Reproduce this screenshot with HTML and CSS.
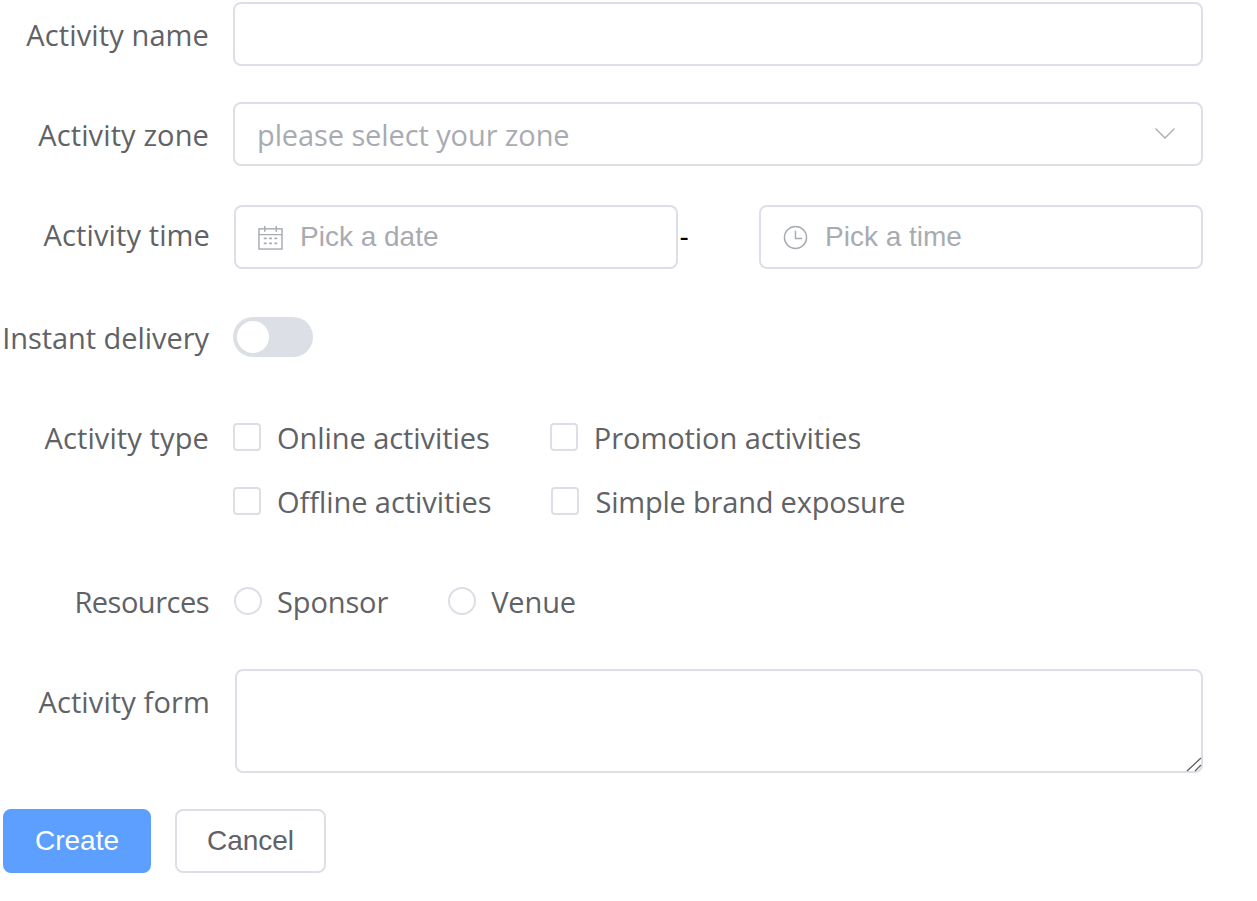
FILE: index.html
```html
<!DOCTYPE html>
<html lang="en">
<head>
<meta charset="utf-8">
<title>Activity form</title>
<link rel="stylesheet" href="styles.css">
</head>
<body>
<form class="form">
  <div class="row row-name">
    <label class="label">Activity name</label>
    <input class="field grow" type="text">
  </div>
  <div class="row">
    <label class="label">Activity zone</label>
    <div class="field grow select">
      <span class="select-text">please select your zone</span>
      <svg class="chevron" viewBox="0 0 20 11" width="20" height="11"><path d="M.5.5l9.500 9.500L19.500.5" fill="none" stroke="#a8abb2" stroke-width="1.300"/></svg>
    </div>
  </div>
  <div class="row row-time">
    <label class="label label-time">Activity time</label>
    <div class="time-fields">
      <div class="field picker">
        <svg class="picker-icon" viewBox="0 0 26 26" width="25" height="25" fill="none" stroke="#a8abb2" stroke-width="1.500">
          <rect x="1" y="4" width="24" height="21"/><path d="M1 10h24M7 1v6M19 1v6"/>
          <path d="M6 14h3M11.500 14h3M17 14h3M6 19h3M11.500 19h3M17 19h3" stroke-width="1.800"/>
        </svg>
        <span class="picker-text">Pick a date</span>
      </div>
      <span class="dash">-</span>
      <div class="field picker picker-end">
        <svg class="picker-icon" viewBox="0 0 26 26" width="25" height="25" fill="none" stroke="#a8abb2" stroke-width="1.500">
          <circle cx="13" cy="13" r="11.500"/><path d="M13 6v8h7"/>
        </svg>
        <span class="picker-text">Pick a time</span>
      </div>
    </div>
  </div>
  <div class="row">
    <label class="label label-tight">Instant delivery</label>
    <div class="line"><span class="switch"><span class="knob"></span></span></div>
  </div>
  <div class="row">
    <label class="label">Activity type</label>
    <div class="choices">
      <div class="line">
        <span class="choice"><span class="box"></span><span class="choice-text">Online activities</span></span>
        <span class="choice"><span class="box"></span><span class="choice-text">Promotion activities</span></span>
      </div>
      <div class="line">
        <span class="choice"><span class="box"></span><span class="choice-text">Offline activities</span></span>
        <span class="choice"><span class="box"></span><span class="choice-text choice-text-tight">Simple brand exposure</span></span>
      </div>
    </div>
  </div>
  <div class="row">
    <label class="label label-narrow">Resources</label>
    <div class="line">
      <span class="choice choice-radio"><span class="radio"></span><span class="choice-text">Sponsor</span></span>
      <span class="choice choice-radio"><span class="radio"></span><span class="choice-text">Venue</span></span>
    </div>
  </div>
  <div class="row">
    <label class="label label-form">Activity form</label>
    <div class="area-wrap">
      <textarea class="area"></textarea>
      <svg class="grip" viewBox="0 0 16 15" width="16" height="15"><path d="M1 14L15 1M9 14l6-6" fill="none" stroke="#5f5f5f" stroke-width="1.300"/></svg>
    </div>
  </div>
  <div class="actions">
    <button class="btn primary" type="button">Create</button>
    <button class="btn" type="button">Cancel</button>
  </div>
</form>
</body>
</html>
```
FILE: styles.css
```css
* { box-sizing: border-box; }
html, body { margin: 0; background: #fff; }
body { height: 901px; overflow: hidden; }
.form {
  width: 1203px;
  padding-top: 2px;
  display: flex;
  flex-direction: column;
  gap: 36px;
  font-family: "Open Sans", "Noto Sans", sans-serif;
  font-size: 29px;
  color: #606266;
}
.row { display: flex; align-items: flex-start; }
.label {
  flex: none;
  width: 233px;
  height: 64px;
  padding-right: 24px;
  line-height: 66px;
  letter-spacing: 0.12px;
  text-align: right;
  white-space: nowrap;
}
.label-time { width: 234px; padding-right: 24px; margin-top: -3px; }
.label-form { width: 235px; padding-right: 25px; }
.label-tight { letter-spacing: -0.05px; }
.label-narrow { letter-spacing: -0.5px; }
.field {
  height: 64px;
  border: 2px solid #dcdfe6;
  border-radius: 8px;
  background: #fff;
  display: flex;
  align-items: center;
}
.grow { flex: 1; min-width: 0; }
.select { padding: 0 26px 0 22px; justify-content: space-between; color: #a8abb2; }
.select-text { letter-spacing: -0.1px; }
.chevron { display: block; margin-top: -1px; }
.row-time { margin-top: 3px; }
.time-fields { display: flex; align-items: center; flex: 1; min-width: 0; }
.picker {
  width: 444px;
  padding-left: 22px;
  font-family: "Liberation Sans", Arial, sans-serif;
  font-size: 28px;
  color: #a8abb2;
}
.picker-end { margin-left: auto; }
.picker-icon { flex: none; margin-right: 17px; }
.dash { margin-left: 1.500px; color: #000; font-family: "Liberation Sans", Arial, sans-serif; font-size: 28px; }
.line { display: flex; align-items: center; height: 64px; }
.switch {
  width: 80px;
  height: 40px;
  border-radius: 20px;
  background: #dcdfe6;
  padding: 4px;
  display: block;
}
.knob { display: block; width: 32px; height: 32px; border-radius: 50%; background: #fff; }
.choices { display: flex; flex-direction: column; }
.choice { display: inline-flex; align-items: center; margin-right: 60px; }
.choice-text { margin-left: 16px; white-space: nowrap; letter-spacing: -0.06px; }
.choice-text-tight { letter-spacing: -0.2px; }
.box {
  width: 28px;
  height: 28px;
  border: 2px solid #dcdfe6;
  border-radius: 4px;
  background: #fff;
  flex: none;
}
.radio {
  width: 28px;
  height: 28px;
  border: 2px solid #dcdfe6;
  border-radius: 50%;
  background: #fff;
  flex: none;
}
.choice-radio { margin-right: 59px; }
.choice-radio .radio { margin-left: 1px; }
.choice-radio .choice-text { margin-left: 15px; letter-spacing: -0.12px; }
.area-wrap { flex: 1; min-width: 0; position: relative; height: 104px; }
.area {
  width: 100%;
  height: 104px;
  border: 2px solid #dcdfe6;
  border-radius: 8px;
  background: #fff;
  outline: none;
  display: block;
  margin: 0;
  resize: none;
}
.grip { position: absolute; right: 1px; bottom: 1px; }
.actions { display: flex; gap: 24px; padding-left: 3px; }
.btn {
  width: 151px;
  height: 64px;
  margin: 0;
  padding: 0;
  border: 2px solid #dcdfe6;
  border-radius: 8px;
  background: #fff;
  color: #606266;
  font-family: "Liberation Sans", Arial, sans-serif;
  font-size: 28px;
}
.primary { width: 148px; background: #5c9fff; border-color: #5c9fff; color: #fff; }
```
